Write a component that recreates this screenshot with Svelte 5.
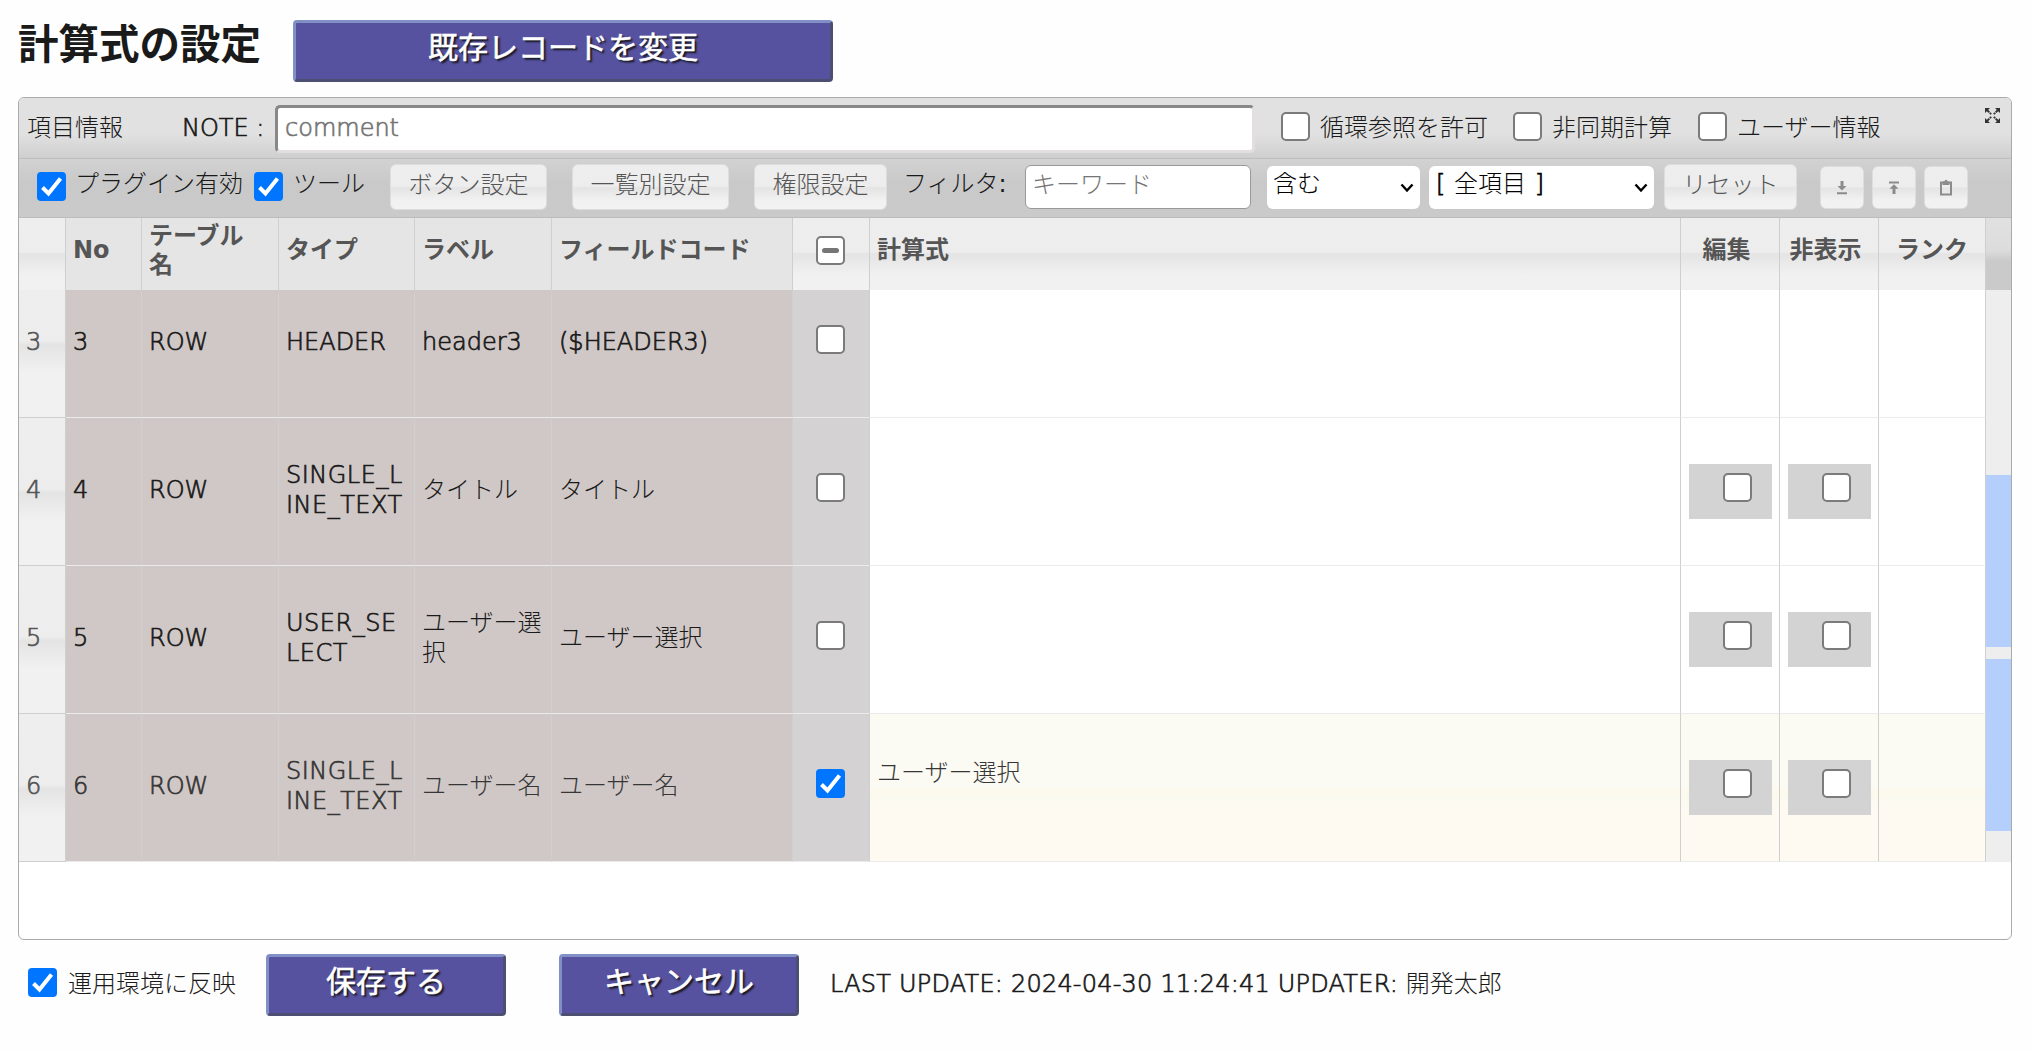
<script>
  const rows = [
    { n: 3, type: 'HEADER', label: 'header3', code: '($HEADER3)', checked: false, boxes: false, formula: '' },
    { n: 4, type: 'SINGLE_LINE_TEXT', label: 'タイトル', code: 'タイトル', checked: false, boxes: true, formula: '' },
    { n: 5, type: 'USER_SELECT', label: 'ユーザー選択', code: 'ユーザー選択', checked: false, boxes: true, formula: '' },
    { n: 6, type: 'SINGLE_LINE_TEXT', label: 'ユーザー名', code: 'ユーザー名', checked: true, boxes: true, formula: 'ユーザー選択' }
  ];
  const isLatin = (s) => /^[\x20-\x7e]+$/.test(s);
</script>

{#snippet check(state)}
  <span class="check" class:on={state === 'on'}>
    {#if state === 'on'}
      <svg viewBox="0 0 29 29"><path d="M5.500 15.500 L11.500 21.500 L23.500 6.500" fill="none" stroke="#fff" stroke-width="4" /></svg>
    {:else if state === 'mixed'}
      <i></i>
    {/if}
  </span>
{/snippet}

{#snippet chevron()}
  <svg class="chev" viewBox="0 0 14 10"><path d="M1.5 1.5 L7 7.5 L12.5 1.5" fill="none" stroke="#000" stroke-width="2.4" /></svg>
{/snippet}

<div class="page">
  <div class="top">
    <h1>計算式の設定</h1>
    <button class="primary wide">既存レコードを変更</button>
  </div>

  <div class="panel">
    <div class="info">
      <span class="t-info">項目情報</span>
      <span class="t-note latin">NOTE :</span>
      <div class="comment latin">comment</div>
      {@render check('off')}<span class="cl c1">循環参照を許可</span>
      {@render check('off')}<span class="cl c2">非同期計算</span>
      {@render check('off')}<span class="cl c3">ユーザー情報</span>
      <svg class="expand" viewBox="0 0 15 15" fill="#333">
        <path d="M0 0h5L0 5zM15 0v5L10 0zM0 15v-5l5 5zM15 15h-5l5-5z" />
        <path d="M1.500 1.500l4.700 4.700M13.500 1.500L8.800 6.200M1.500 13.500l4.700-4.700M13.500 13.500L8.800 8.800" stroke="#333" stroke-width="1.900" stroke-dasharray="4 .7 2" />
      </svg>
    </div>

    <div class="tools">
      {@render check('on')}<span class="tl p1">プラグイン有効</span>
      {@render check('on')}<span class="tl p2">ツール</span>
      <button class="soft b1">ボタン設定</button>
      <button class="soft b2">一覧別設定</button>
      <button class="soft b3">権限設定</button>
      <span class="tl p3">フィルタ:</span>
      <div class="keyword">キーワード</div>
      <div class="select s1"><span>含む</span>{@render chevron()}</div>
      <div class="select s2"><span><span class="latin">[</span> 全項目 <span class="latin">]</span></span>{@render chevron()}</div>
      <button class="soft b4">リセット</button>
      <button class="soft icon i1" aria-label="download">
        <svg viewBox="0 0 12 14" fill="#8c8c8c"><path d="M4.500 0h3v5H10.500L6 9.500 1.500 5h3zM1 11.300h10v2H1z" /></svg>
      </button>
      <button class="soft icon i2" aria-label="upload">
        <svg viewBox="0 0 12 14" fill="#8c8c8c"><path d="M1 .5h10v2H1zM6 3.200l4.500 4.600H7.500V13h-3V7.800H1.500z" /></svg>
      </button>
      <button class="soft icon i3" aria-label="clipboard">
        <svg class="clip" viewBox="0 0 14 17"><path d="M2 3.500h10v12H2z" fill="none" stroke="#8c8c8c" stroke-width="2" /><path d="M3.500 2.500h2a1.500 1.700 0 0 1 3 0h2V6h-7z" fill="#8c8c8c" /></svg>
      </button>
    </div>

    <div class="grid head">
      <div></div>
      <div class="dk">No</div>
      <div class="dk">テーブル名</div>
      <div class="dk">タイプ</div>
      <div class="dk">ラベル</div>
      <div class="dk">フィールドコード</div>
      <div class="mid all">{@render check('mixed')}</div>
      <div>計算式</div>
      <div class="mid left">編集</div>
      <div class="mid left">非表示</div>
      <div class="mid">ランク</div>
      <div class="gutter"></div>
    </div>

    <div class="body">
      <div class="rows">
        {#each rows as r}
          <div class="grid row" class:active={r.checked}>
            <div class="num latin">{r.n}</div>
            <div class="tan latin">{r.n}</div>
            <div class="tan latin">ROW</div>
            <div class="tan latin" class:spaced={r.type.includes('_')}>{r.type}</div>
            <div class="tan" class:latin={isLatin(r.label)}>{r.label}</div>
            <div class="tan" class:latin={isLatin(r.code)}>{r.code}</div>
            <div class="sel">{@render check(r.checked ? 'on' : 'off')}</div>
            <div class="plain formula">{r.formula}</div>
            <div class="plain">{#if r.boxes}<span class="box">{@render check('off')}</span>{/if}</div>
            <div class="plain">{#if r.boxes}<span class="box">{@render check('off')}</span>{/if}</div>
            <div class="plain"></div>
          </div>
        {/each}
      </div>
      <div class="scroll"><i></i><i></i></div>
    </div>
  </div>

  <div class="bottom">
    {@render check('on')}<span class="deploy">運用環境に反映</span>
    <button class="primary">保存する</button>
    <button class="primary cancel">キャンセル</button>
    <span class="updated"><span class="latin stamp">LAST UPDATE: 2024-04-30 11:24:41 UPDATER:</span>{' '}開発太郎</span>
  </div>
</div>

<style>
  :global(body) { background: #fefefe; }
  .page, .page * { box-sizing: border-box; }
  .page {
    width: 2031px; height: 1050px; overflow: hidden; padding: 0 19px 0 18px;
    font: 400 24px/30px "DejaVu Sans", "Noto Sans CJK JP Light", "Noto Sans CJK JP", sans-serif; color: #1a1a1a; white-space: nowrap;
  }
  .latin { font-family: "DejaVu Sans ExtraLight", "DejaVu Sans Light", "DejaVu Sans", sans-serif; font-weight: 200; -webkit-text-stroke: 0.7px currentColor; }
  .top { display: flex; height: 97px; padding-top: 20px; }
  h1 { margin: 0; font-size: 40.5px; line-height: 44px; font-weight: 700; width: 275px; font-family: "Noto Sans CJK JP", sans-serif; }
  button { font-family: inherit; font-weight: inherit; padding: 0; margin: 0; display: block; }
  .primary {
    width: 240px; height: 62px; border: 3px solid; border-color: #8090c5 #4c4f72 #4c4f72 #8090c5; border-radius: 4px;
    background: #5752a0; color: #fff; font-size: 30px; line-height: 42px; font-weight: 400; padding-bottom: 12px;
    font-family: "Noto Sans CJK JP", sans-serif; text-shadow: 2px 2px 2px #111; -webkit-text-stroke: 0.5px #fff;
  }
  .wide { width: 540px; }
  .panel { height: 843px; border: 1px solid #aaa; border-radius: 6px; overflow: hidden; background: #fff; }
  .check {
    display: block; flex: none; width: 29px; height: 29px; border: 2px solid #7b7b7b; border-radius: 5px; background: #fff;
  }
  .check.on { border: 0; background: #0075ff; border-radius: 4px; }
  .check svg { display: block; width: 29px; height: 29px; }
  .check i { display: block; width: 17px; height: 5px; border-radius: 3px; background: #767676; margin: 10px 4px; }
  .info {
    height: 61px; border-bottom: 1px solid #bebebe; display: flex; align-items: flex-start; padding: 14px 0 0 8px;
    background: linear-gradient(#e1e1e1 0, #e1e1e1 60%, #cfcfcf 100%);
  }
  .t-info { width: 155px; padding-top: 1px; }
  .t-note { width: 93px; padding-top: 1px; }
  .comment {
    width: 980px; height: 48px; margin: -7px 26px 0 0; border: 3px solid; border-color: #888 #e3dfdf #e3dfdf #888;
    border-radius: 5px; background: #fff; color: #757575; line-height: 41px; padding-left: 7px;
  }
  .cl { padding: 1px 0 0 10px; }
  .c1 { width: 203px; } .c2 { width: 156px; } .c3 { width: 258px; }
  .expand { width: 15px; height: 15px; margin-top: -4px; }
  .tools {
    height: 59px; border-bottom: 1px solid #bcbcbc; display: flex; align-items: flex-start; padding: 5px 0 0 18px;
    background: linear-gradient(#d2d2d2, #c9c9c9 40%, #cacaca);
  }
  .tools > .check { margin-top: 8px; }
  .tl { padding: 5px 0 0 9px; }
  .p1 { width: 188px; } .p2 { width: 107px; padding-left: 10px; } .p3 { width: 137px; padding-left: 15px; }
  .soft {
    height: 46px; border: 1px solid #ddd; border-radius: 6px; color: #555; font-size: 24px; line-height: 30px; padding-bottom: 4px;
    background: linear-gradient(#eee 0, #ededed 48%, #e4e4e4 52%, #f1f1f1 80%, #f2f2f2 100%);
  }
  .b1 { width: 157px; margin-right: 25px; } .b2 { width: 157px; margin-right: 25px; } .b3 { width: 133px; margin-right: 1px; }
  .keyword {
    width: 226px; height: 44px; margin: 1px 16px 0 0; border: 1px solid #999; border-radius: 6px; background: #fff;
    color: #757575; padding: 4px 0 0 6px;
  }
  .select {
    height: 43px; margin-top: 2px; border-radius: 6px; background: #fff; color: #000; display: flex;
    justify-content: space-between; padding: 3px 6px 0 6px;
  }
  .s1 { width: 153px; margin-right: 9px; } .s2 { width: 225px; margin-right: 10px; padding-left: 7px; word-spacing: 1px; }
  .chev { width: 14px; height: 10px; margin-top: 14px; }
  .b4 { width: 133px; margin-right: 23px; }
  .icon { width: 44px; height: 43px; margin-top: 2px; display: flex; justify-content: center; align-items: center; padding: 0; }
  .icon svg { width: 12px; height: 14px; }
  .icon .clip { width: 14px; height: 17px; }
  .i1, .i2 { margin-right: 8px; }
  .grid { display: grid; grid-template-columns: 47px 76px 137px 136px 137px 241px 77px 811px 99px 99px 107px 25px; }
  .grid > div { border-right: 1px solid #cfcfcf; padding: 0 7px; display: flex; align-items: center; white-space: normal; word-break: break-all; }
  .head { height: 72px; font-weight: 700; color: #555; line-height: 29px; font-family: "DejaVu Sans", "Noto Sans CJK JP", sans-serif; }
  .head > div { padding-bottom: 7px; padding-right: 12px; background: linear-gradient(#eee 0, #ededed 47%, #e4e4e4 50%, #f1f1f1 80%, #f1f1f1 100%); }
  .head > .dk { background: #e5e5e5; }
  .grid > .mid { justify-content: center; padding-left: 0; padding-right: 0; }
  .grid > .left { padding-right: 7px; }
  .grid > .all { padding-right: 1px; }
  .head > .gutter { border: 0; background: linear-gradient(#e1e1e1 0, #dcdcdc 45%, #cacaca 60%, #cacaca 100%); }
  .body { height: 572px; display: flex; align-items: stretch; overflow: hidden; }
  .rows { width: 1967px; height: 592px; margin-top: -20px; flex: none; }
  .row { height: 148px; grid-template-columns: 47px 76px 137px 136px 137px 241px 77px 811px 99px 99px 107px; }
  .grid.row > div { border-bottom: 1px solid #ebebeb; padding-bottom: 4px; }
  .grid.row > .num {
    color: #555; border-bottom-color: #cfcfcf;
    background: linear-gradient(#eee 0, #ededed 48%, #e4e4e4 51%, #f1f1f1 70%, #f1f1f1 100%);
  }
  .grid.row > .tan { background: #d0c8c6; padding-right: 5px; }
  .spaced { letter-spacing: 0.5px; }
  .grid.row > .sel { background: #d4d2d3; justify-content: center; padding: 0 8px 8px 7px; }
  .row.active > div { color: #363636; }
  .row.active > .plain { background: linear-gradient(#fbfbf3 0, #fbfbf3 50%, #fdf9ec 52%, #fbfaf0 58%, #fefaf2 64%); }
  .grid.row > .formula { padding-bottom: 30px; }
  .row > .plain:not(.formula) { padding-top: 4px; }
  .box { width: 83px; height: 55px; background: #d3d3d3; padding: 9px 0 0 34px; margin: 0 1px; flex: none; }
  .scroll { width: 25px; background: #eee; padding-top: 185px; }
  .scroll i { display: block; height: 172px; background: #b5cffd; margin-bottom: 12px; }
  .bottom { display: flex; padding: 14px 0 0 10px; }
  .bottom > .check { margin-top: 14px; }
  .deploy { width: 209px; padding: 15px 0 0 11px; }
  .cancel { margin-left: 53px; }
  .updated { padding: 15px 0 0 31px; }
  .stamp { letter-spacing: 0.22px; }
</style>
